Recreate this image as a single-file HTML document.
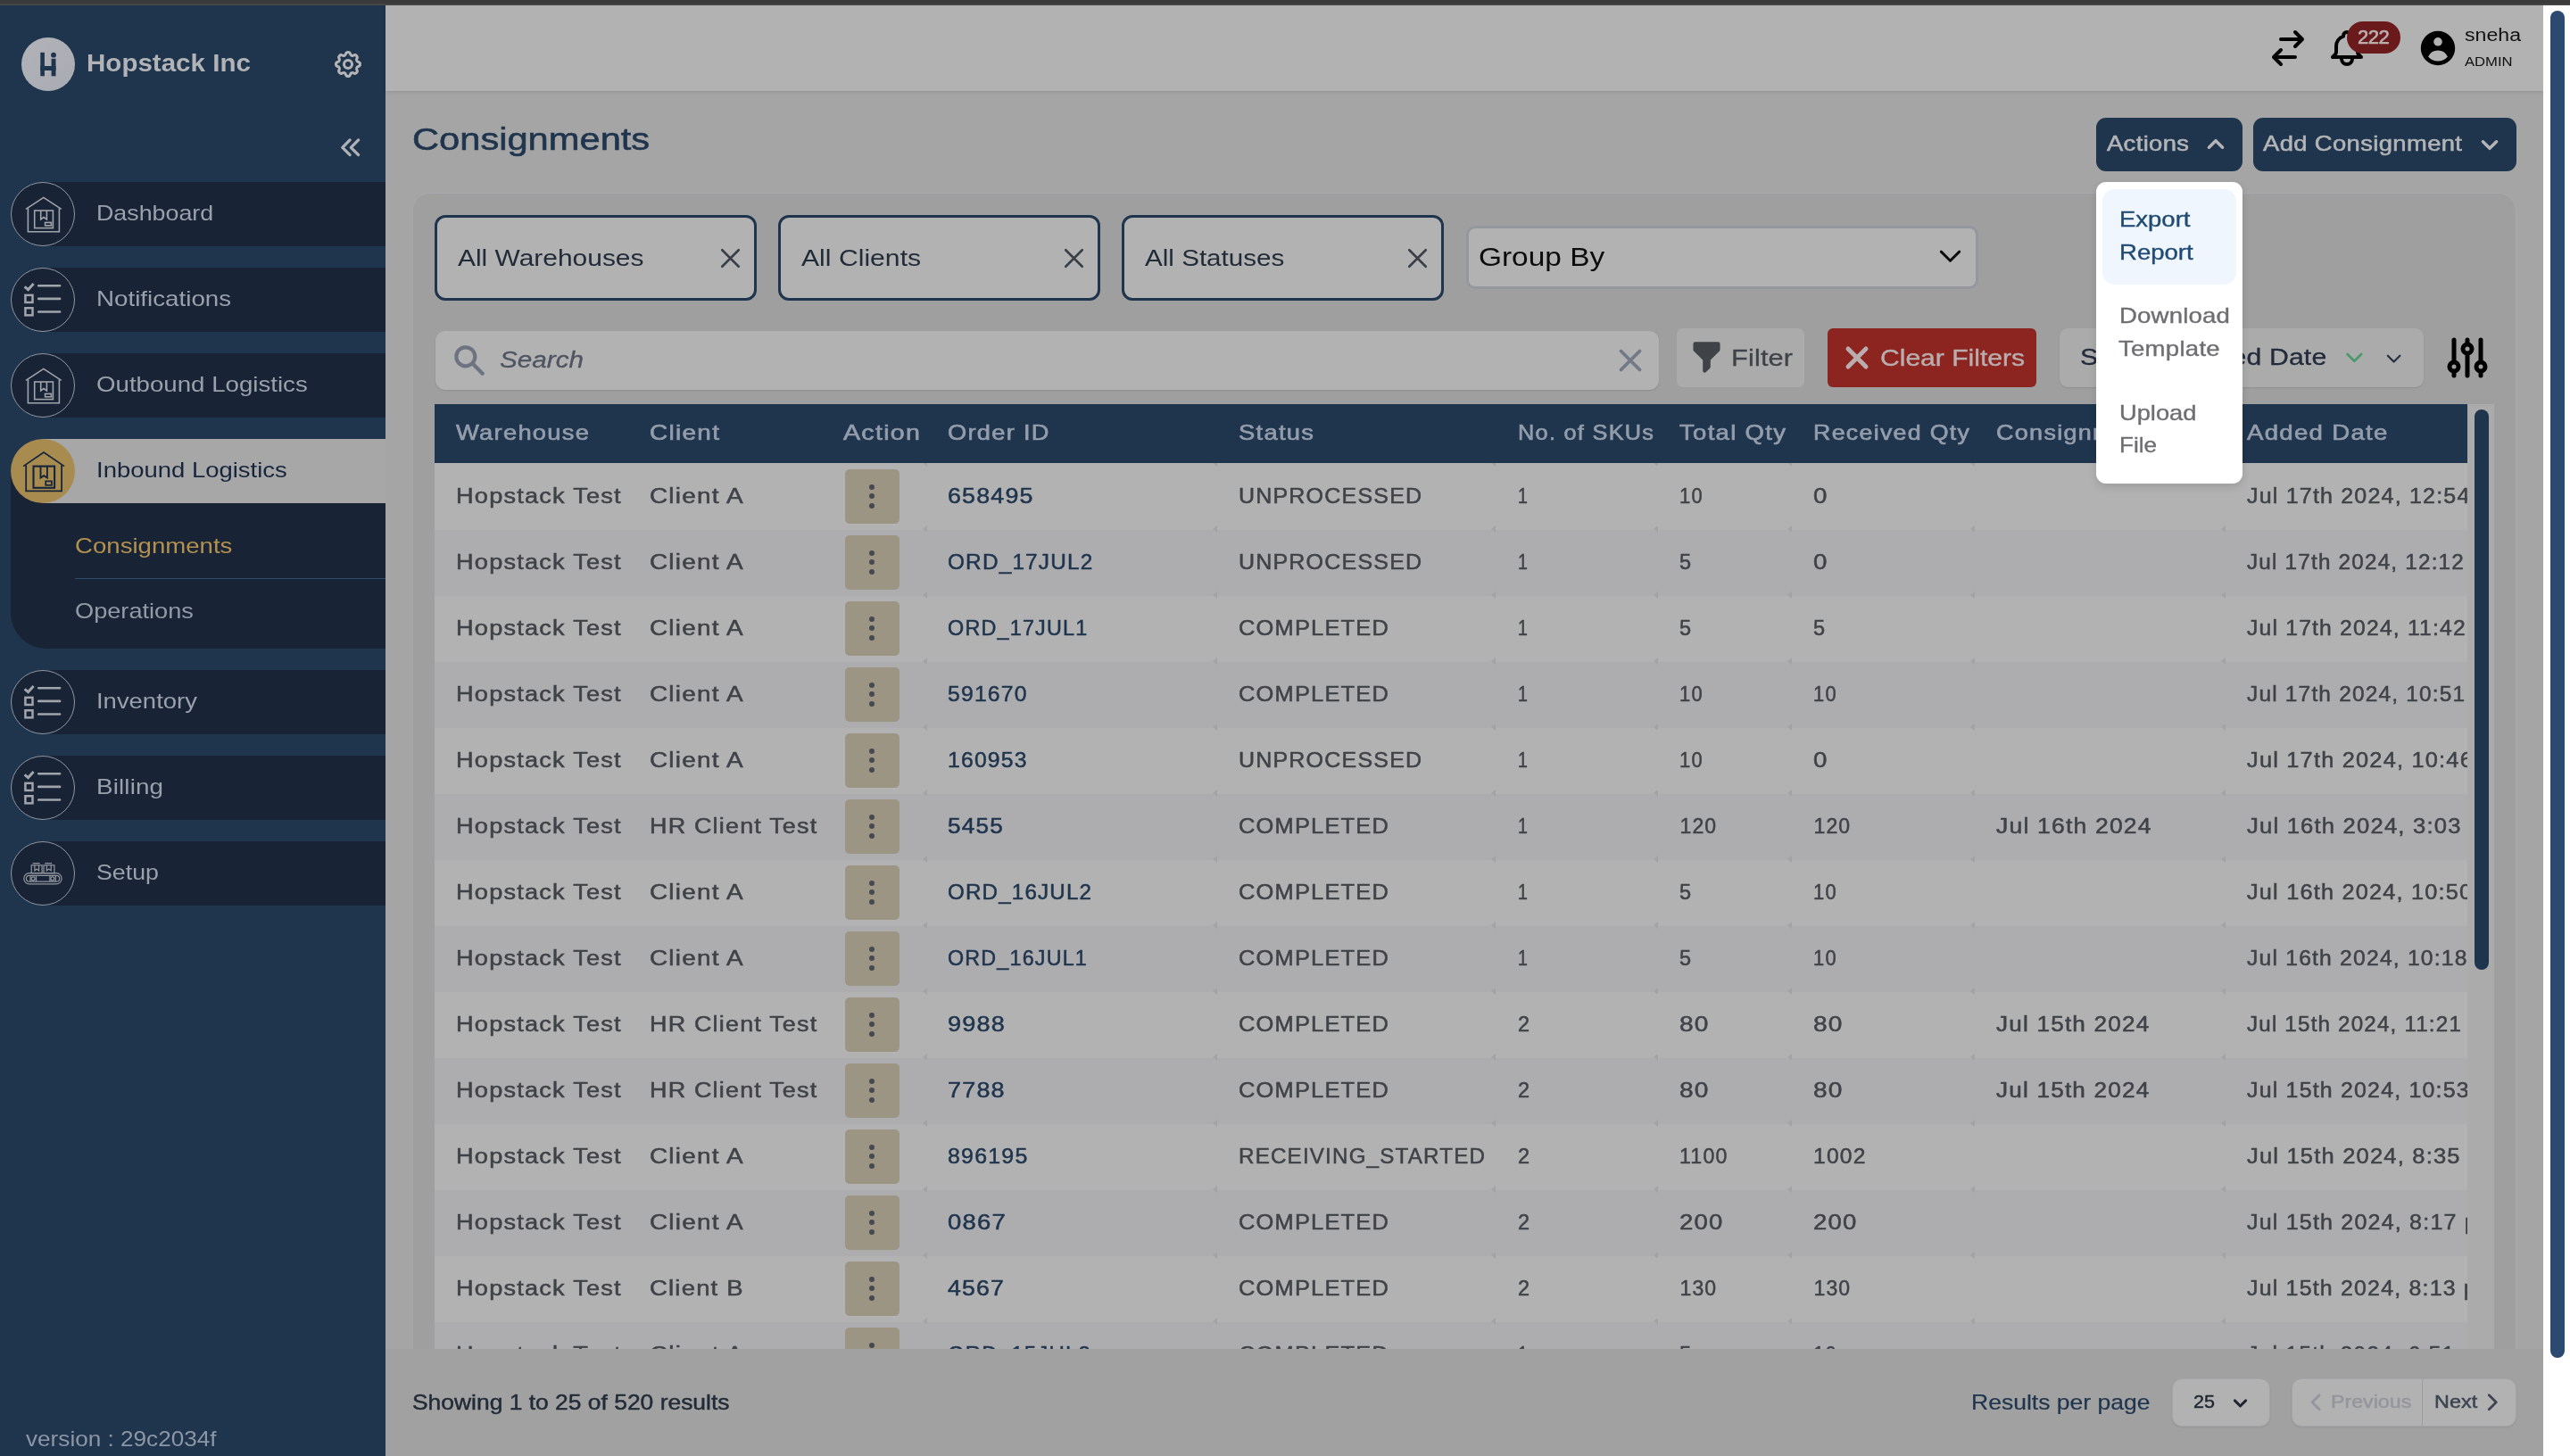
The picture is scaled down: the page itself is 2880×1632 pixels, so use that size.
<!DOCTYPE html><html lang="en"><head><meta charset="utf-8"><title>Consignments - Hopstack</title><style>
*{margin:0;padding:0;box-sizing:content-box}
html,body{width:2880px;height:1632px;overflow:hidden;background:#a5a5a5;font-family:"Liberation Sans",sans-serif;}
#app{will-change:transform;position:relative;width:2880px;height:1632px;overflow:hidden}
.b{position:absolute;display:block}
.t{position:absolute;white-space:pre;display:block;transform-origin:0 50%}
.row,.thead{position:absolute;left:0;top:0}
.dot{position:absolute;left:27.5px;width:6px;height:6px;border-radius:50%;background:#454950}
.tick{position:absolute;width:0;height:0;border-top:4.5px solid transparent;border-bottom:4.5px solid transparent;border-right:5px solid #a3a3a6}
</style></head><body>
<div id="app">
<div class="b" style="left:0px;top:0px;width:2880px;height:6px;background:linear-gradient(#3a3a3a 0,#3b3b3b 60%,#494a48 90%,#494a48 100%);"></div>
<div id="sidebar">
<div class="b" style="left:0px;top:6px;width:432px;height:1626px;background:#1f344d;"></div>
<div class="b" style="left:24px;top:41.8px;width:60px;height:60px;background:linear-gradient(135deg,#b1b3b9,#a9abb2);border-radius:30px;"></div><svg class="b" style="left:24px;top:41.8px;" width="60" height="60" viewBox="0 0 60 60"><g fill="#1f344d"><rect x="21.3" y="16.8" width="4.6" height="26.5"/><rect x="21.3" y="32" width="17.2" height="5"/><rect x="33.6" y="23.8" width="4.9" height="19.5"/><circle cx="36" cy="19.7" r="2.9"/></g></svg><span class="t" style="left:96.7px;top:56.2px;font-size:28.3px;line-height:28.3px;color:#b1b3b6;font-weight:700;transform:scaleX(1.044);">Hopstack Inc</span><svg class="b" style="left:372px;top:54px;" width="36" height="36" viewBox="0 0 24 24"><g fill="none" stroke="#b3b5b8" stroke-width="2" stroke-linecap="round" stroke-linejoin="round"><path d="M10.325 4.317c.426-1.756 2.924-1.756 3.35 0a1.724 1.724 0 002.573 1.066c1.543-.94 3.31.826 2.37 2.37a1.724 1.724 0 001.065 2.572c1.756.426 1.756 2.924 0 3.35a1.724 1.724 0 00-1.066 2.573c.94 1.543-.826 3.31-2.37 2.37a1.724 1.724 0 00-2.572 1.065c-.426 1.756-2.924 1.756-3.35 0a1.724 1.724 0 00-2.573-1.066c-1.543.94-3.31-.826-2.37-2.37a1.724 1.724 0 00-1.065-2.572c-1.756-.426-1.756-2.924 0-3.35a1.724 1.724 0 001.066-2.573c-.94-1.543.826-3.31 2.37-2.37.996.608 2.296.07 2.572-1.065z"/><path d="M15 12a3 3 0 11-6 0 3 3 0 016 0z"/></g></svg><svg class="b" style="left:378.7px;top:150.6px;" width="28.6" height="28.6" viewBox="0 0 24 24"><path d="M11 19l-7-7 7-7m8 14l-7-7 7-7" fill="none" stroke="#b0b2b5" stroke-width="2.75" stroke-linecap="round" stroke-linejoin="round"/></svg>
<div class="b" style="left:12px;top:204px;width:420px;height:72px;background:#182336;border-radius:36px 0 0 36px;"></div>
<div class="b" style="left:12px;top:204px;width:72px;height:72px;border-radius:36px;border:1.6px solid #9299a3;box-sizing:border-box;"></div><svg class="b" style="left:12px;top:204px;" width="72" height="72" viewBox="0 0 72 72"><g fill="none" stroke="#a0a4ab" stroke-width="1.6" stroke-linejoin="miter"><path d="M17 30.3L36.8 17.4L56.7 30.3"/><path d="M19.4 29.2V55.8H54.4V29.2"/><rect x="26.7" y="32" width="20.7" height="19.6"/><path d="M33.7 32V42L37 39.6L40.4 42V32"/><rect x="38.6" y="45.4" width="6.8" height="3.4"/></g></svg><span class="t" style="left:108.4px;top:227.8px;font-size:23.6px;line-height:23.6px;color:#9aa1ab;transform:scaleX(1.136);">Dashboard</span>
<div class="b" style="left:12px;top:300px;width:420px;height:72px;background:#182336;border-radius:36px 0 0 36px;"></div>
<div class="b" style="left:12px;top:300px;width:72px;height:72px;border-radius:36px;border:1.6px solid #9299a3;box-sizing:border-box;"></div><svg class="b" style="left:12px;top:300px;" width="72" height="72" viewBox="0 0 72 72"><g fill="none" stroke="#a0a4ab" stroke-width="2.6" stroke-linecap="round"><path d="M31.2 20.2H55.1M31.2 34.9H55.1M31.2 49.5H55.1"/><rect x="16.4" y="30.85" width="8.1" height="8.1" stroke-width="2.5" stroke-linecap="butt"/><rect x="16.4" y="45.25" width="8.1" height="8.1" stroke-width="2.5" stroke-linecap="butt"/><path d="M15.6 21.3L19.6 24.6L25.6 18.0" stroke-width="3" stroke-linecap="butt"/></g></svg><span class="t" style="left:108.4px;top:323.8px;font-size:23.6px;line-height:23.6px;color:#9aa1ab;transform:scaleX(1.176);">Notifications</span>
<div class="b" style="left:12px;top:396px;width:420px;height:72px;background:#182336;border-radius:36px 0 0 36px;"></div>
<div class="b" style="left:12px;top:396px;width:72px;height:72px;border-radius:36px;border:1.6px solid #9299a3;box-sizing:border-box;"></div><svg class="b" style="left:12px;top:396px;" width="72" height="72" viewBox="0 0 72 72"><g fill="none" stroke="#a0a4ab" stroke-width="1.6" stroke-linejoin="miter"><path d="M17 30.3L36.8 17.4L56.7 30.3"/><path d="M19.4 29.2V55.8H54.4V29.2"/><rect x="26.7" y="32" width="20.7" height="19.6"/><path d="M33.7 32V42L37 39.6L40.4 42V32"/><rect x="38.6" y="45.4" width="6.8" height="3.4"/></g></svg><span class="t" style="left:108.4px;top:419.8px;font-size:23.6px;line-height:23.6px;color:#9aa1ab;transform:scaleX(1.172);">Outbound Logistics</span>
<div class="b" style="left:12px;top:528px;width:420px;height:198.5px;background:#182336;border-radius:0 0 0 40px;"></div>
<div class="b" style="left:48px;top:492px;width:384px;height:72px;background:#a7a7a7;"></div>
<div class="b" style="left:12px;top:492px;width:72px;height:72px;background:#a88b4e;border-radius:36px;"></div><svg class="b" style="left:12px;top:492px;" width="72" height="72" viewBox="0 0 72 72"><g fill="none" stroke="#16243b" stroke-width="1.75" stroke-linejoin="miter"><path d="M14.1 30.6L37 15L60 30.6"/><path d="M17.2 29.2V58.3H57.1V29.2"/><rect x="25.5" y="30.6" width="23.6" height="24.2" stroke-width="2.1"/><path d="M33.5 30.6V43.5L37.2 41.2L40.9 43.5V30.6" stroke-width="1.9"/><rect x="39.2" y="47.4" width="6.8" height="4.4"/></g></svg><span class="t" style="left:108.4px;top:515.8px;font-size:23.6px;line-height:23.6px;color:#17253c;transform:scaleX(1.164);">Inbound Logistics</span><span class="t" style="left:83.6px;top:600.3px;font-size:24px;line-height:24px;color:#b3924f;transform:scaleX(1.150);">Consignments</span>
<div class="b" style="left:84px;top:647.6px;width:348px;height:1.4px;background:#2c4c69;"></div><span class="t" style="left:83.6px;top:672.6px;font-size:24px;line-height:24px;color:#929ba7;transform:scaleX(1.132);">Operations</span>
<div class="b" style="left:12px;top:751px;width:420px;height:72px;background:#182336;border-radius:36px 0 0 36px;"></div>
<div class="b" style="left:12px;top:751px;width:72px;height:72px;border-radius:36px;border:1.6px solid #9299a3;box-sizing:border-box;"></div><svg class="b" style="left:12px;top:751px;" width="72" height="72" viewBox="0 0 72 72"><g fill="none" stroke="#a0a4ab" stroke-width="2.6" stroke-linecap="round"><path d="M31.2 20.2H55.1M31.2 34.9H55.1M31.2 49.5H55.1"/><rect x="16.4" y="30.85" width="8.1" height="8.1" stroke-width="2.5" stroke-linecap="butt"/><rect x="16.4" y="45.25" width="8.1" height="8.1" stroke-width="2.5" stroke-linecap="butt"/><path d="M15.6 21.3L19.6 24.6L25.6 18.0" stroke-width="3" stroke-linecap="butt"/></g></svg><span class="t" style="left:108.4px;top:774.8px;font-size:23.6px;line-height:23.6px;color:#9aa1ab;transform:scaleX(1.163);">Inventory</span>
<div class="b" style="left:12px;top:847px;width:420px;height:72px;background:#182336;border-radius:36px 0 0 36px;"></div>
<div class="b" style="left:12px;top:847px;width:72px;height:72px;border-radius:36px;border:1.6px solid #9299a3;box-sizing:border-box;"></div><svg class="b" style="left:12px;top:847px;" width="72" height="72" viewBox="0 0 72 72"><g fill="none" stroke="#a0a4ab" stroke-width="2.6" stroke-linecap="round"><path d="M31.2 20.2H55.1M31.2 34.9H55.1M31.2 49.5H55.1"/><rect x="16.4" y="30.85" width="8.1" height="8.1" stroke-width="2.5" stroke-linecap="butt"/><rect x="16.4" y="45.25" width="8.1" height="8.1" stroke-width="2.5" stroke-linecap="butt"/><path d="M15.6 21.3L19.6 24.6L25.6 18.0" stroke-width="3" stroke-linecap="butt"/></g></svg><span class="t" style="left:108.4px;top:870.8px;font-size:23.6px;line-height:23.6px;color:#9aa1ab;letter-spacing:0.11px;transform:scaleX(1.180);">Billing</span>
<div class="b" style="left:12px;top:943px;width:420px;height:72px;background:#182336;border-radius:36px 0 0 36px;"></div>
<div class="b" style="left:12px;top:943px;width:72px;height:72px;border-radius:36px;border:1.6px solid #9299a3;box-sizing:border-box;"></div><svg class="b" style="left:12px;top:943px;" width="72" height="72" viewBox="0 0 72 72"><g fill="none" stroke="#a0a4ab" stroke-width="1.2" opacity="0.9"><rect x="14.8" y="35.6" width="42.3" height="12.3" rx="6.15"/><rect x="17.4" y="38.4" width="37.3" height="6.8" rx="3.4"/><circle cx="25.1" cy="41.8" r="2"/><circle cx="46.8" cy="41.8" r="2"/><path d="M22 38.6V45M28.5 38.4V45.2M43.9 38.4V45.2M50.3 38.6V45"/><rect x="23.2" y="26.8" width="11.9" height="9.0"/><rect x="37" y="26.8" width="11.9" height="9.0"/><path d="M24.6 24.7H32.7M38.2 24.7H46.2"/><path d="M26.9 26.8V32.9L29.2 31L31.6 32.9V26.8M40.3 26.8V32.9L42.7 31L45.2 32.9V26.8"/></g></svg><span class="t" style="left:108.4px;top:966.8px;font-size:23.6px;line-height:23.6px;color:#9aa1ab;transform:scaleX(1.134);">Setup</span><span class="t" style="left:28.7px;top:1601.1px;font-size:24px;line-height:24px;color:#8c96a4;transform:scaleX(1.089);">version : 29c2034f</span></div>
<div id="toolbar"><span class="t" style="left:462.0px;top:138.9px;font-size:35.5px;line-height:35.5px;color:#1f344d;-webkit-text-stroke:0.6px #1f344d;transform:scaleX(1.173);">Consignments</span>
<div class="b" style="left:2349px;top:132px;width:164px;height:60px;background:#1f344d;border-radius:11px;"></div><span class="t" style="left:2360.9px;top:150.4px;font-size:23.2px;line-height:23.2px;color:#b4b5b7;letter-spacing:0.31px;-webkit-text-stroke:0.55px #b4b5b7;transform:scaleX(1.180);">Actions</span><svg class="b" style="left:2470px;top:149.3px;" width="26" height="26" viewBox="0 0 24 24"><path d="M5 15l7-7 7 7" fill="none" stroke="#b4b5b7" stroke-width="3.2" stroke-linecap="round" stroke-linejoin="round"/></svg>
<div class="b" style="left:2525px;top:132px;width:295px;height:60px;background:#1f344d;border-radius:11px;"></div><span class="t" style="left:2536.1px;top:150.4px;font-size:23.2px;line-height:23.2px;color:#b4b5b7;letter-spacing:0.33px;-webkit-text-stroke:0.55px #b4b5b7;transform:scaleX(1.180);">Add Consignment</span><svg class="b" style="left:2777px;top:149.3px;" width="26" height="26" viewBox="0 0 24 24"><path d="M19 9l-7 7-7-7" fill="none" stroke="#b4b5b7" stroke-width="3.2" stroke-linecap="round" stroke-linejoin="round"/></svg></div>
<div id="filters">
<div class="b" style="left:462px;top:216px;width:2358px;height:1344px;background:#9f9f9f;border-radius:20px;border:1.5px solid #a9a9ad;box-sizing:border-box;"></div>
<div class="b" style="left:486.7px;top:240.6px;width:361.4px;height:96px;background:#b2b2b2;border-radius:12px;border:3px solid #1f344d;box-sizing:border-box;"></div><span class="t" style="left:513.3px;top:276.1px;font-size:26px;line-height:26px;color:#222b38;transform:scaleX(1.151);">All Warehouses</span><svg class="b" style="left:799.5px;top:270.6px;" width="37" height="37" viewBox="0 0 24 24"><path d="M6 18L18 6M6 6l12 12" fill="none" stroke="#393e49" stroke-width="1.7" stroke-linecap="round" stroke-linejoin="round"/></svg>
<div class="b" style="left:871.6px;top:240.6px;width:361.6px;height:96px;background:#b2b2b2;border-radius:12px;border:3px solid #1f344d;box-sizing:border-box;"></div><span class="t" style="left:898.0px;top:276.1px;font-size:26px;line-height:26px;color:#222b38;transform:scaleX(1.160);">All Clients</span><svg class="b" style="left:1184.5px;top:270.6px;" width="37" height="37" viewBox="0 0 24 24"><path d="M6 18L18 6M6 6l12 12" fill="none" stroke="#393e49" stroke-width="1.7" stroke-linecap="round" stroke-linejoin="round"/></svg>
<div class="b" style="left:1256.6px;top:240.6px;width:361.7px;height:96px;background:#b2b2b2;border-radius:12px;border:3px solid #1f344d;box-sizing:border-box;"></div><span class="t" style="left:1283.4px;top:276.1px;font-size:26px;line-height:26px;color:#222b38;transform:scaleX(1.139);">All Statuses</span><svg class="b" style="left:1569.5px;top:270.6px;" width="37" height="37" viewBox="0 0 24 24"><path d="M6 18L18 6M6 6l12 12" fill="none" stroke="#393e49" stroke-width="1.7" stroke-linecap="round" stroke-linejoin="round"/></svg>
<div class="b" style="left:1643px;top:253.4px;width:574px;height:70.6px;background:#b2b2b2;border-radius:10px;border:3px solid #95979e;box-sizing:border-box;"></div><span class="t" style="left:1656.5px;top:274.2px;font-size:29px;line-height:29px;color:#0c0c0c;transform:scaleX(1.152);">Group By</span><svg class="b" style="left:2167.5px;top:268.5px;" width="35" height="35" viewBox="0 0 24 24"><path d="M19 9l-7 7-7-7" fill="none" stroke="#0c0c0c" stroke-width="2" stroke-linecap="round" stroke-linejoin="round"/></svg>
<div class="b" style="left:487.6px;top:371px;width:1371.1px;height:65.8px;background:#b2b2b2;border-radius:11px;box-shadow:0 1px 2px rgba(0,0,0,.12);"></div><svg class="b" style="left:505px;top:382.9px;" width="42" height="42" viewBox="0 0 20 20"><path d="M8 4a4 4 0 100 8 4 4 0 000-8zM2 8a6 6 0 1110.89 3.476l4.817 4.817a1 1 0 01-1.414 1.414l-4.816-4.816A6 6 0 012 8z" fill="#6d7380" fill-rule="evenodd" clip-rule="evenodd"/></svg><span class="t" style="left:559.5px;top:390.2px;font-size:26px;line-height:26px;color:#4e5561;font-style:italic;-webkit-text-stroke:0.3px #4e5561;transform:scaleX(1.141);">Search</span><svg class="b" style="left:1805.7px;top:382.8px;" width="42" height="42" viewBox="0 0 24 24"><path d="M6 18L18 6M6 6l12 12" fill="none" stroke="#737987" stroke-width="2.2" stroke-linecap="round" stroke-linejoin="round"/></svg>
<div class="b" style="left:1878.6px;top:368px;width:143.4px;height:65.7px;background:#ababab;border-radius:7px;"></div><svg class="b" style="left:1890.5px;top:379.4px;" width="43" height="43" viewBox="0 0 20 20"><path d="M3 3a1 1 0 011-1h12a1 1 0 011 1v3a1 1 0 01-.293.707L12 11.414V15a1 1 0 01-.293.707l-2 2A1 1 0 018 17v-5.586L3.293 6.707A1 1 0 013 6V3z" fill="#3f4348" fill-rule="evenodd" clip-rule="evenodd"/></svg><span class="t" style="left:1939.8px;top:387.6px;font-size:26px;line-height:26px;color:#3f4348;letter-spacing:0.15px;-webkit-text-stroke:0.3px #3f4348;transform:scaleX(1.180);">Filter</span>
<div class="b" style="left:2048px;top:368px;width:234px;height:65.7px;background:#8c2420;border-radius:6px;"></div><svg class="b" style="left:2061px;top:381px;" width="40" height="40" viewBox="0 0 24 24"><path d="M6 18L18 6M6 6l12 12" fill="none" stroke="#b9adad" stroke-width="3" stroke-linecap="round" stroke-linejoin="round"/></svg><span class="t" style="left:2107.4px;top:387.6px;font-size:26px;line-height:26px;color:#b9adad;-webkit-text-stroke:0.4px #b9adad;transform:scaleX(1.156);">Clear Filters</span>
<div class="b" style="left:2308px;top:368px;width:408px;height:66px;background:#ababab;border-radius:9px;box-shadow:0 1px 2px rgba(0,0,0,.10);"></div><span class="t" style="left:2331.0px;top:387.8px;font-size:25.6px;line-height:25.6px;color:#222b3b;letter-spacing:0.12px;-webkit-text-stroke:0.3px #222b3b;transform:scaleX(1.180);">Sort By: Added Date</span><svg class="b" style="left:2624.65px;top:387.45px;" width="26.7" height="26.7" viewBox="0 0 24 24"><path d="M19 9l-7 7-7-7" fill="none" stroke="#489a6b" stroke-width="2.4" stroke-linecap="round" stroke-linejoin="round"/></svg><svg class="b" style="left:2671.4px;top:389.5px;" width="23.2" height="23.2" viewBox="0 0 24 24"><path d="M19 9l-7 7-7-7" fill="none" stroke="#272e3f" stroke-width="2.3" stroke-linecap="round" stroke-linejoin="round"/></svg><svg class="b" style="left:2735.1px;top:370.9px;" width="60" height="60" viewBox="0 0 24 24"><path d="M12 6V4m0 2a2 2 0 100 4m0-4a2 2 0 110 4m-6 8a2 2 0 100-4m0 4a2 2 0 110-4m0 4v2m0-6V4m6 6v10m6-2a2 2 0 100-4m0 4a2 2 0 110-4m0 4v2m0-6V4" fill="none" stroke="#000" stroke-width="2" stroke-linecap="round" stroke-linejoin="round"/></svg></div>
<div id="table">
<div class="b tbl" style="left:487px;top:453px;width:2278px;height:1059px;overflow:hidden;">
<div class="row">
<div class="b" style="left:0px;top:64.8px;width:2278px;height:76px;background:#b2b2b2;"></div><span class="t" style="left:23.6px;top:92.4px;font-size:23px;line-height:23px;color:#3f4247;letter-spacing:1.02px;-webkit-text-stroke:0.5px #3f4247;transform:scaleX(1.181);">Hopstack Test</span><span class="t" style="left:240.8px;top:92.4px;font-size:23px;line-height:23px;color:#3f4247;letter-spacing:0.99px;-webkit-text-stroke:0.5px #3f4247;transform:scaleX(1.214);">Client A</span>
<div class="b" style="left:459.7px;top:73.4px;width:61px;height:61px;background:#9d9583;border-radius:5px;"><i class="dot" style="top:16.3px"></i><i class="dot" style="top:27.1px"></i><i class="dot" style="top:37.8px"></i></div><span class="t" style="left:574.9px;top:92.4px;font-size:23px;line-height:23px;color:#1f344d;letter-spacing:1.03px;-webkit-text-stroke:0.5px #1f344d;transform:scaleX(1.166);">658495</span><span class="t" style="left:901.3px;top:92.4px;font-size:23px;line-height:23px;color:#3f4247;letter-spacing:1.10px;-webkit-text-stroke:0.5px #3f4247;transform:scaleX(1.087);">UNPROCESSED</span><span class="t" style="left:1214.1px;top:92.4px;font-size:23px;line-height:23px;color:#3f4247;-webkit-text-stroke:0.5px #3f4247;transform:scaleX(0.850);">1</span><span class="t" style="left:1395.4px;top:92.4px;font-size:23px;line-height:23px;color:#3f4247;letter-spacing:1.26px;-webkit-text-stroke:0.5px #3f4247;transform:scaleX(0.952);">10</span><span class="t" style="left:1545.4px;top:92.4px;font-size:23px;line-height:23px;color:#3f4247;-webkit-text-stroke:0.5px #3f4247;transform:scaleX(1.205);">0</span><span class="t" style="left:2030.8px;top:92.4px;font-size:23px;line-height:23px;color:#3f4247;letter-spacing:1.10px;-webkit-text-stroke:0.5px #3f4247;transform:scaleX(1.087);">Jul 17th 2024, 12:54 pm</span><i class="tick" style="left:546.5px;top:62.3px"></i><i class="tick" style="left:872px;top:62.3px"></i><i class="tick" style="left:1184px;top:62.3px"></i><i class="tick" style="left:1366px;top:62.3px"></i><i class="tick" style="left:1516px;top:62.3px"></i><i class="tick" style="left:1721px;top:62.3px"></i><i class="tick" style="left:2002px;top:62.3px"></i></div>
<div class="row">
<div class="b" style="left:0px;top:140.8px;width:2278px;height:74px;background:#adadb0;"></div><span class="t" style="left:23.6px;top:166.4px;font-size:23px;line-height:23px;color:#3f4247;letter-spacing:1.02px;-webkit-text-stroke:0.5px #3f4247;transform:scaleX(1.181);">Hopstack Test</span><span class="t" style="left:240.8px;top:166.4px;font-size:23px;line-height:23px;color:#3f4247;letter-spacing:0.99px;-webkit-text-stroke:0.5px #3f4247;transform:scaleX(1.214);">Client A</span>
<div class="b" style="left:459.7px;top:147.4px;width:61px;height:61px;background:#9d9583;border-radius:5px;"><i class="dot" style="top:16.3px"></i><i class="dot" style="top:27.1px"></i><i class="dot" style="top:37.8px"></i></div><span class="t" style="left:574.9px;top:166.4px;font-size:23px;line-height:23px;color:#1f344d;letter-spacing:1.13px;-webkit-text-stroke:0.5px #1f344d;transform:scaleX(1.058);">ORD_17JUL2</span><span class="t" style="left:901.3px;top:166.4px;font-size:23px;line-height:23px;color:#3f4247;letter-spacing:1.10px;-webkit-text-stroke:0.5px #3f4247;transform:scaleX(1.087);">UNPROCESSED</span><span class="t" style="left:1214.1px;top:166.4px;font-size:23px;line-height:23px;color:#3f4247;-webkit-text-stroke:0.5px #3f4247;transform:scaleX(0.850);">1</span><span class="t" style="left:1395.4px;top:166.4px;font-size:23px;line-height:23px;color:#3f4247;-webkit-text-stroke:0.5px #3f4247;transform:scaleX(1.023);">5</span><span class="t" style="left:1545.4px;top:166.4px;font-size:23px;line-height:23px;color:#3f4247;-webkit-text-stroke:0.5px #3f4247;transform:scaleX(1.205);">0</span><span class="t" style="left:2030.8px;top:166.4px;font-size:23px;line-height:23px;color:#3f4247;letter-spacing:1.14px;-webkit-text-stroke:0.5px #3f4247;transform:scaleX(1.055);">Jul 17th 2024, 12:12 pm</span><i class="tick" style="left:546.5px;top:136.3px"></i><i class="tick" style="left:872px;top:136.3px"></i><i class="tick" style="left:1184px;top:136.3px"></i><i class="tick" style="left:1366px;top:136.3px"></i><i class="tick" style="left:1516px;top:136.3px"></i><i class="tick" style="left:1721px;top:136.3px"></i><i class="tick" style="left:2002px;top:136.3px"></i></div>
<div class="row">
<div class="b" style="left:0px;top:214.8px;width:2278px;height:74px;background:#b2b2b2;"></div><span class="t" style="left:23.6px;top:240.4px;font-size:23px;line-height:23px;color:#3f4247;letter-spacing:1.02px;-webkit-text-stroke:0.5px #3f4247;transform:scaleX(1.181);">Hopstack Test</span><span class="t" style="left:240.8px;top:240.4px;font-size:23px;line-height:23px;color:#3f4247;letter-spacing:0.99px;-webkit-text-stroke:0.5px #3f4247;transform:scaleX(1.214);">Client A</span>
<div class="b" style="left:459.7px;top:221.4px;width:61px;height:61px;background:#9d9583;border-radius:5px;"><i class="dot" style="top:16.3px"></i><i class="dot" style="top:27.1px"></i><i class="dot" style="top:37.8px"></i></div><span class="t" style="left:574.9px;top:240.4px;font-size:23px;line-height:23px;color:#1f344d;letter-spacing:1.18px;-webkit-text-stroke:0.5px #1f344d;transform:scaleX(1.016);">ORD_17JUL1</span><span class="t" style="left:901.3px;top:240.4px;font-size:23px;line-height:23px;color:#3f4247;letter-spacing:1.09px;-webkit-text-stroke:0.5px #3f4247;transform:scaleX(1.105);">COMPLETED</span><span class="t" style="left:1214.1px;top:240.4px;font-size:23px;line-height:23px;color:#3f4247;-webkit-text-stroke:0.5px #3f4247;transform:scaleX(0.850);">1</span><span class="t" style="left:1395.4px;top:240.4px;font-size:23px;line-height:23px;color:#3f4247;-webkit-text-stroke:0.5px #3f4247;transform:scaleX(1.023);">5</span><span class="t" style="left:1545.4px;top:240.4px;font-size:23px;line-height:23px;color:#3f4247;-webkit-text-stroke:0.5px #3f4247;transform:scaleX(1.023);">5</span><span class="t" style="left:2030.8px;top:240.4px;font-size:23px;line-height:23px;color:#3f4247;letter-spacing:1.12px;-webkit-text-stroke:0.5px #3f4247;transform:scaleX(1.073);">Jul 17th 2024, 11:42 am</span><i class="tick" style="left:546.5px;top:210.3px"></i><i class="tick" style="left:872px;top:210.3px"></i><i class="tick" style="left:1184px;top:210.3px"></i><i class="tick" style="left:1366px;top:210.3px"></i><i class="tick" style="left:1516px;top:210.3px"></i><i class="tick" style="left:1721px;top:210.3px"></i><i class="tick" style="left:2002px;top:210.3px"></i></div>
<div class="row">
<div class="b" style="left:0px;top:288.8px;width:2278px;height:74px;background:#adadb0;"></div><span class="t" style="left:23.6px;top:314.4px;font-size:23px;line-height:23px;color:#3f4247;letter-spacing:1.02px;-webkit-text-stroke:0.5px #3f4247;transform:scaleX(1.181);">Hopstack Test</span><span class="t" style="left:240.8px;top:314.4px;font-size:23px;line-height:23px;color:#3f4247;letter-spacing:0.99px;-webkit-text-stroke:0.5px #3f4247;transform:scaleX(1.214);">Client A</span>
<div class="b" style="left:459.7px;top:295.4px;width:61px;height:61px;background:#9d9583;border-radius:5px;"><i class="dot" style="top:16.3px"></i><i class="dot" style="top:27.1px"></i><i class="dot" style="top:37.8px"></i></div><span class="t" style="left:574.9px;top:314.4px;font-size:23px;line-height:23px;color:#1f344d;letter-spacing:1.12px;-webkit-text-stroke:0.5px #1f344d;transform:scaleX(1.075);">591670</span><span class="t" style="left:901.3px;top:314.4px;font-size:23px;line-height:23px;color:#3f4247;letter-spacing:1.09px;-webkit-text-stroke:0.5px #3f4247;transform:scaleX(1.105);">COMPLETED</span><span class="t" style="left:1214.1px;top:314.4px;font-size:23px;line-height:23px;color:#3f4247;-webkit-text-stroke:0.5px #3f4247;transform:scaleX(0.850);">1</span><span class="t" style="left:1395.4px;top:314.4px;font-size:23px;line-height:23px;color:#3f4247;letter-spacing:1.26px;-webkit-text-stroke:0.5px #3f4247;transform:scaleX(0.952);">10</span><span class="t" style="left:1545.4px;top:314.4px;font-size:23px;line-height:23px;color:#3f4247;letter-spacing:1.26px;-webkit-text-stroke:0.5px #3f4247;transform:scaleX(0.952);">10</span><span class="t" style="left:2030.8px;top:314.4px;font-size:23px;line-height:23px;color:#3f4247;letter-spacing:1.13px;-webkit-text-stroke:0.5px #3f4247;transform:scaleX(1.062);">Jul 17th 2024, 10:51 am</span><i class="tick" style="left:546.5px;top:284.3px"></i><i class="tick" style="left:872px;top:284.3px"></i><i class="tick" style="left:1184px;top:284.3px"></i><i class="tick" style="left:1366px;top:284.3px"></i><i class="tick" style="left:1516px;top:284.3px"></i><i class="tick" style="left:1721px;top:284.3px"></i><i class="tick" style="left:2002px;top:284.3px"></i></div>
<div class="row">
<div class="b" style="left:0px;top:362.8px;width:2278px;height:74px;background:#b2b2b2;"></div><span class="t" style="left:23.6px;top:388.4px;font-size:23px;line-height:23px;color:#3f4247;letter-spacing:1.02px;-webkit-text-stroke:0.5px #3f4247;transform:scaleX(1.181);">Hopstack Test</span><span class="t" style="left:240.8px;top:388.4px;font-size:23px;line-height:23px;color:#3f4247;letter-spacing:0.99px;-webkit-text-stroke:0.5px #3f4247;transform:scaleX(1.214);">Client A</span>
<div class="b" style="left:459.7px;top:369.4px;width:61px;height:61px;background:#9d9583;border-radius:5px;"><i class="dot" style="top:16.3px"></i><i class="dot" style="top:27.1px"></i><i class="dot" style="top:37.8px"></i></div><span class="t" style="left:574.9px;top:388.4px;font-size:23px;line-height:23px;color:#1f344d;letter-spacing:1.12px;-webkit-text-stroke:0.5px #1f344d;transform:scaleX(1.075);">160953</span><span class="t" style="left:901.3px;top:388.4px;font-size:23px;line-height:23px;color:#3f4247;letter-spacing:1.10px;-webkit-text-stroke:0.5px #3f4247;transform:scaleX(1.087);">UNPROCESSED</span><span class="t" style="left:1214.1px;top:388.4px;font-size:23px;line-height:23px;color:#3f4247;-webkit-text-stroke:0.5px #3f4247;transform:scaleX(0.850);">1</span><span class="t" style="left:1395.4px;top:388.4px;font-size:23px;line-height:23px;color:#3f4247;letter-spacing:1.26px;-webkit-text-stroke:0.5px #3f4247;transform:scaleX(0.952);">10</span><span class="t" style="left:1545.4px;top:388.4px;font-size:23px;line-height:23px;color:#3f4247;-webkit-text-stroke:0.5px #3f4247;transform:scaleX(1.205);">0</span><span class="t" style="left:2030.8px;top:388.4px;font-size:23px;line-height:23px;color:#3f4247;letter-spacing:1.09px;-webkit-text-stroke:0.5px #3f4247;transform:scaleX(1.103);">Jul 17th 2024, 10:46 am</span><i class="tick" style="left:546.5px;top:358.3px"></i><i class="tick" style="left:872px;top:358.3px"></i><i class="tick" style="left:1184px;top:358.3px"></i><i class="tick" style="left:1366px;top:358.3px"></i><i class="tick" style="left:1516px;top:358.3px"></i><i class="tick" style="left:1721px;top:358.3px"></i><i class="tick" style="left:2002px;top:358.3px"></i></div>
<div class="row">
<div class="b" style="left:0px;top:436.8px;width:2278px;height:74px;background:#adadb0;"></div><span class="t" style="left:23.6px;top:462.4px;font-size:23px;line-height:23px;color:#3f4247;letter-spacing:1.02px;-webkit-text-stroke:0.5px #3f4247;transform:scaleX(1.181);">Hopstack Test</span><span class="t" style="left:240.8px;top:462.4px;font-size:23px;line-height:23px;color:#3f4247;letter-spacing:1.02px;-webkit-text-stroke:0.5px #3f4247;transform:scaleX(1.171);">HR Client Test</span>
<div class="b" style="left:459.7px;top:443.4px;width:61px;height:61px;background:#9d9583;border-radius:5px;"><i class="dot" style="top:16.3px"></i><i class="dot" style="top:27.1px"></i><i class="dot" style="top:37.8px"></i></div><span class="t" style="left:574.9px;top:462.4px;font-size:23px;line-height:23px;color:#1f344d;letter-spacing:1.06px;-webkit-text-stroke:0.5px #1f344d;transform:scaleX(1.136);">5455</span><span class="t" style="left:901.3px;top:462.4px;font-size:23px;line-height:23px;color:#3f4247;letter-spacing:1.09px;-webkit-text-stroke:0.5px #3f4247;transform:scaleX(1.105);">COMPLETED</span><span class="t" style="left:1214.1px;top:462.4px;font-size:23px;line-height:23px;color:#3f4247;-webkit-text-stroke:0.5px #3f4247;transform:scaleX(0.850);">1</span><span class="t" style="left:1395.4px;top:462.4px;font-size:23px;line-height:23px;color:#3f4247;letter-spacing:1.20px;-webkit-text-stroke:0.5px #3f4247;">120</span><span class="t" style="left:1545.4px;top:462.4px;font-size:23px;line-height:23px;color:#3f4247;letter-spacing:1.20px;-webkit-text-stroke:0.5px #3f4247;">120</span><span class="t" style="left:1750.1px;top:462.4px;font-size:23px;line-height:23px;color:#3f4247;letter-spacing:1.04px;-webkit-text-stroke:0.5px #3f4247;transform:scaleX(1.152);">Jul 16th 2024</span><span class="t" style="left:2030.8px;top:462.4px;font-size:23px;line-height:23px;color:#3f4247;letter-spacing:1.08px;-webkit-text-stroke:0.5px #3f4247;transform:scaleX(1.113);">Jul 16th 2024, 3:03 pm</span><i class="tick" style="left:546.5px;top:432.3px"></i><i class="tick" style="left:872px;top:432.3px"></i><i class="tick" style="left:1184px;top:432.3px"></i><i class="tick" style="left:1366px;top:432.3px"></i><i class="tick" style="left:1516px;top:432.3px"></i><i class="tick" style="left:1721px;top:432.3px"></i><i class="tick" style="left:2002px;top:432.3px"></i></div>
<div class="row">
<div class="b" style="left:0px;top:510.8px;width:2278px;height:74px;background:#b2b2b2;"></div><span class="t" style="left:23.6px;top:536.4px;font-size:23px;line-height:23px;color:#3f4247;letter-spacing:1.02px;-webkit-text-stroke:0.5px #3f4247;transform:scaleX(1.181);">Hopstack Test</span><span class="t" style="left:240.8px;top:536.4px;font-size:23px;line-height:23px;color:#3f4247;letter-spacing:0.99px;-webkit-text-stroke:0.5px #3f4247;transform:scaleX(1.214);">Client A</span>
<div class="b" style="left:459.7px;top:517.4px;width:61px;height:61px;background:#9d9583;border-radius:5px;"><i class="dot" style="top:16.3px"></i><i class="dot" style="top:27.1px"></i><i class="dot" style="top:37.8px"></i></div><span class="t" style="left:574.9px;top:536.4px;font-size:23px;line-height:23px;color:#1f344d;letter-spacing:1.14px;-webkit-text-stroke:0.5px #1f344d;transform:scaleX(1.049);">ORD_16JUL2</span><span class="t" style="left:901.3px;top:536.4px;font-size:23px;line-height:23px;color:#3f4247;letter-spacing:1.09px;-webkit-text-stroke:0.5px #3f4247;transform:scaleX(1.105);">COMPLETED</span><span class="t" style="left:1214.1px;top:536.4px;font-size:23px;line-height:23px;color:#3f4247;-webkit-text-stroke:0.5px #3f4247;transform:scaleX(0.850);">1</span><span class="t" style="left:1395.4px;top:536.4px;font-size:23px;line-height:23px;color:#3f4247;-webkit-text-stroke:0.5px #3f4247;transform:scaleX(1.023);">5</span><span class="t" style="left:1545.4px;top:536.4px;font-size:23px;line-height:23px;color:#3f4247;letter-spacing:1.26px;-webkit-text-stroke:0.5px #3f4247;transform:scaleX(0.952);">10</span><span class="t" style="left:2030.8px;top:536.4px;font-size:23px;line-height:23px;color:#3f4247;letter-spacing:1.09px;-webkit-text-stroke:0.5px #3f4247;transform:scaleX(1.100);">Jul 16th 2024, 10:50 am</span><i class="tick" style="left:546.5px;top:506.3px"></i><i class="tick" style="left:872px;top:506.3px"></i><i class="tick" style="left:1184px;top:506.3px"></i><i class="tick" style="left:1366px;top:506.3px"></i><i class="tick" style="left:1516px;top:506.3px"></i><i class="tick" style="left:1721px;top:506.3px"></i><i class="tick" style="left:2002px;top:506.3px"></i></div>
<div class="row">
<div class="b" style="left:0px;top:584.8px;width:2278px;height:74px;background:#adadb0;"></div><span class="t" style="left:23.6px;top:610.4px;font-size:23px;line-height:23px;color:#3f4247;letter-spacing:1.02px;-webkit-text-stroke:0.5px #3f4247;transform:scaleX(1.181);">Hopstack Test</span><span class="t" style="left:240.8px;top:610.4px;font-size:23px;line-height:23px;color:#3f4247;letter-spacing:0.99px;-webkit-text-stroke:0.5px #3f4247;transform:scaleX(1.214);">Client A</span>
<div class="b" style="left:459.7px;top:591.4px;width:61px;height:61px;background:#9d9583;border-radius:5px;"><i class="dot" style="top:16.3px"></i><i class="dot" style="top:27.1px"></i><i class="dot" style="top:37.8px"></i></div><span class="t" style="left:574.9px;top:610.4px;font-size:23px;line-height:23px;color:#1f344d;letter-spacing:1.18px;-webkit-text-stroke:0.5px #1f344d;transform:scaleX(1.013);">ORD_16JUL1</span><span class="t" style="left:901.3px;top:610.4px;font-size:23px;line-height:23px;color:#3f4247;letter-spacing:1.09px;-webkit-text-stroke:0.5px #3f4247;transform:scaleX(1.105);">COMPLETED</span><span class="t" style="left:1214.1px;top:610.4px;font-size:23px;line-height:23px;color:#3f4247;-webkit-text-stroke:0.5px #3f4247;transform:scaleX(0.850);">1</span><span class="t" style="left:1395.4px;top:610.4px;font-size:23px;line-height:23px;color:#3f4247;-webkit-text-stroke:0.5px #3f4247;transform:scaleX(1.023);">5</span><span class="t" style="left:1545.4px;top:610.4px;font-size:23px;line-height:23px;color:#3f4247;letter-spacing:1.26px;-webkit-text-stroke:0.5px #3f4247;transform:scaleX(0.952);">10</span><span class="t" style="left:2030.8px;top:610.4px;font-size:23px;line-height:23px;color:#3f4247;letter-spacing:1.12px;-webkit-text-stroke:0.5px #3f4247;transform:scaleX(1.073);">Jul 16th 2024, 10:18 am</span><i class="tick" style="left:546.5px;top:580.3px"></i><i class="tick" style="left:872px;top:580.3px"></i><i class="tick" style="left:1184px;top:580.3px"></i><i class="tick" style="left:1366px;top:580.3px"></i><i class="tick" style="left:1516px;top:580.3px"></i><i class="tick" style="left:1721px;top:580.3px"></i><i class="tick" style="left:2002px;top:580.3px"></i></div>
<div class="row">
<div class="b" style="left:0px;top:658.8px;width:2278px;height:74px;background:#b2b2b2;"></div><span class="t" style="left:23.6px;top:684.4px;font-size:23px;line-height:23px;color:#3f4247;letter-spacing:1.02px;-webkit-text-stroke:0.5px #3f4247;transform:scaleX(1.181);">Hopstack Test</span><span class="t" style="left:240.8px;top:684.4px;font-size:23px;line-height:23px;color:#3f4247;letter-spacing:1.02px;-webkit-text-stroke:0.5px #3f4247;transform:scaleX(1.171);">HR Client Test</span>
<div class="b" style="left:459.7px;top:665.4px;width:61px;height:61px;background:#9d9583;border-radius:5px;"><i class="dot" style="top:16.3px"></i><i class="dot" style="top:27.1px"></i><i class="dot" style="top:37.8px"></i></div><span class="t" style="left:574.9px;top:684.4px;font-size:23px;line-height:23px;color:#1f344d;letter-spacing:1.02px;-webkit-text-stroke:0.5px #1f344d;transform:scaleX(1.177);">9988</span><span class="t" style="left:901.3px;top:684.4px;font-size:23px;line-height:23px;color:#3f4247;letter-spacing:1.09px;-webkit-text-stroke:0.5px #3f4247;transform:scaleX(1.105);">COMPLETED</span><span class="t" style="left:1214.1px;top:684.4px;font-size:23px;line-height:23px;color:#3f4247;-webkit-text-stroke:0.5px #3f4247;transform:scaleX(1.021);">2</span><span class="t" style="left:1395.4px;top:684.4px;font-size:23px;line-height:23px;color:#3f4247;letter-spacing:0.98px;-webkit-text-stroke:0.5px #3f4247;transform:scaleX(1.221);">80</span><span class="t" style="left:1545.4px;top:684.4px;font-size:23px;line-height:23px;color:#3f4247;letter-spacing:0.98px;-webkit-text-stroke:0.5px #3f4247;transform:scaleX(1.221);">80</span><span class="t" style="left:1750.1px;top:684.4px;font-size:23px;line-height:23px;color:#3f4247;letter-spacing:1.06px;-webkit-text-stroke:0.5px #3f4247;transform:scaleX(1.135);">Jul 15th 2024</span><span class="t" style="left:2030.8px;top:684.4px;font-size:23px;line-height:23px;color:#3f4247;letter-spacing:1.14px;-webkit-text-stroke:0.5px #3f4247;transform:scaleX(1.050);">Jul 15th 2024, 11:21 pm</span><i class="tick" style="left:546.5px;top:654.3px"></i><i class="tick" style="left:872px;top:654.3px"></i><i class="tick" style="left:1184px;top:654.3px"></i><i class="tick" style="left:1366px;top:654.3px"></i><i class="tick" style="left:1516px;top:654.3px"></i><i class="tick" style="left:1721px;top:654.3px"></i><i class="tick" style="left:2002px;top:654.3px"></i></div>
<div class="row">
<div class="b" style="left:0px;top:732.8px;width:2278px;height:74px;background:#adadb0;"></div><span class="t" style="left:23.6px;top:758.4px;font-size:23px;line-height:23px;color:#3f4247;letter-spacing:1.02px;-webkit-text-stroke:0.5px #3f4247;transform:scaleX(1.181);">Hopstack Test</span><span class="t" style="left:240.8px;top:758.4px;font-size:23px;line-height:23px;color:#3f4247;letter-spacing:1.02px;-webkit-text-stroke:0.5px #3f4247;transform:scaleX(1.171);">HR Client Test</span>
<div class="b" style="left:459.7px;top:739.4px;width:61px;height:61px;background:#9d9583;border-radius:5px;"><i class="dot" style="top:16.3px"></i><i class="dot" style="top:27.1px"></i><i class="dot" style="top:37.8px"></i></div><span class="t" style="left:574.9px;top:758.4px;font-size:23px;line-height:23px;color:#1f344d;letter-spacing:1.02px;-webkit-text-stroke:0.5px #1f344d;transform:scaleX(1.173);">7788</span><span class="t" style="left:901.3px;top:758.4px;font-size:23px;line-height:23px;color:#3f4247;letter-spacing:1.09px;-webkit-text-stroke:0.5px #3f4247;transform:scaleX(1.105);">COMPLETED</span><span class="t" style="left:1214.1px;top:758.4px;font-size:23px;line-height:23px;color:#3f4247;-webkit-text-stroke:0.5px #3f4247;transform:scaleX(1.021);">2</span><span class="t" style="left:1395.4px;top:758.4px;font-size:23px;line-height:23px;color:#3f4247;letter-spacing:0.98px;-webkit-text-stroke:0.5px #3f4247;transform:scaleX(1.221);">80</span><span class="t" style="left:1545.4px;top:758.4px;font-size:23px;line-height:23px;color:#3f4247;letter-spacing:0.98px;-webkit-text-stroke:0.5px #3f4247;transform:scaleX(1.221);">80</span><span class="t" style="left:1750.1px;top:758.4px;font-size:23px;line-height:23px;color:#3f4247;letter-spacing:1.06px;-webkit-text-stroke:0.5px #3f4247;transform:scaleX(1.135);">Jul 15th 2024</span><span class="t" style="left:2030.8px;top:758.4px;font-size:23px;line-height:23px;color:#3f4247;letter-spacing:1.11px;-webkit-text-stroke:0.5px #3f4247;transform:scaleX(1.083);">Jul 15th 2024, 10:53 pm</span><i class="tick" style="left:546.5px;top:728.3px"></i><i class="tick" style="left:872px;top:728.3px"></i><i class="tick" style="left:1184px;top:728.3px"></i><i class="tick" style="left:1366px;top:728.3px"></i><i class="tick" style="left:1516px;top:728.3px"></i><i class="tick" style="left:1721px;top:728.3px"></i><i class="tick" style="left:2002px;top:728.3px"></i></div>
<div class="row">
<div class="b" style="left:0px;top:806.8px;width:2278px;height:74px;background:#b2b2b2;"></div><span class="t" style="left:23.6px;top:832.4px;font-size:23px;line-height:23px;color:#3f4247;letter-spacing:1.02px;-webkit-text-stroke:0.5px #3f4247;transform:scaleX(1.181);">Hopstack Test</span><span class="t" style="left:240.8px;top:832.4px;font-size:23px;line-height:23px;color:#3f4247;letter-spacing:0.99px;-webkit-text-stroke:0.5px #3f4247;transform:scaleX(1.214);">Client A</span>
<div class="b" style="left:459.7px;top:813.4px;width:61px;height:61px;background:#9d9583;border-radius:5px;"><i class="dot" style="top:16.3px"></i><i class="dot" style="top:27.1px"></i><i class="dot" style="top:37.8px"></i></div><span class="t" style="left:574.9px;top:832.4px;font-size:23px;line-height:23px;color:#1f344d;letter-spacing:1.11px;-webkit-text-stroke:0.5px #1f344d;transform:scaleX(1.085);">896195</span><span class="t" style="left:901.3px;top:832.4px;font-size:23px;line-height:23px;color:#3f4247;letter-spacing:1.14px;-webkit-text-stroke:0.5px #3f4247;transform:scaleX(1.050);">RECEIVING_STARTED</span><span class="t" style="left:1214.1px;top:832.4px;font-size:23px;line-height:23px;color:#3f4247;-webkit-text-stroke:0.5px #3f4247;transform:scaleX(1.021);">2</span><span class="t" style="left:1395.4px;top:832.4px;font-size:23px;line-height:23px;color:#3f4247;letter-spacing:1.19px;-webkit-text-stroke:0.5px #3f4247;transform:scaleX(1.005);">1100</span><span class="t" style="left:1545.4px;top:832.4px;font-size:23px;line-height:23px;color:#3f4247;letter-spacing:1.12px;-webkit-text-stroke:0.5px #3f4247;transform:scaleX(1.072);">1002</span><span class="t" style="left:2030.8px;top:832.4px;font-size:23px;line-height:23px;color:#3f4247;letter-spacing:1.08px;-webkit-text-stroke:0.5px #3f4247;transform:scaleX(1.109);">Jul 15th 2024, 8:35 pm</span><i class="tick" style="left:546.5px;top:802.3px"></i><i class="tick" style="left:872px;top:802.3px"></i><i class="tick" style="left:1184px;top:802.3px"></i><i class="tick" style="left:1366px;top:802.3px"></i><i class="tick" style="left:1516px;top:802.3px"></i><i class="tick" style="left:1721px;top:802.3px"></i><i class="tick" style="left:2002px;top:802.3px"></i></div>
<div class="row">
<div class="b" style="left:0px;top:880.8px;width:2278px;height:74px;background:#adadb0;"></div><span class="t" style="left:23.6px;top:906.4px;font-size:23px;line-height:23px;color:#3f4247;letter-spacing:1.02px;-webkit-text-stroke:0.5px #3f4247;transform:scaleX(1.181);">Hopstack Test</span><span class="t" style="left:240.8px;top:906.4px;font-size:23px;line-height:23px;color:#3f4247;letter-spacing:0.99px;-webkit-text-stroke:0.5px #3f4247;transform:scaleX(1.214);">Client A</span>
<div class="b" style="left:459.7px;top:887.4px;width:61px;height:61px;background:#9d9583;border-radius:5px;"><i class="dot" style="top:16.3px"></i><i class="dot" style="top:27.1px"></i><i class="dot" style="top:37.8px"></i></div><span class="t" style="left:574.9px;top:906.4px;font-size:23px;line-height:23px;color:#1f344d;letter-spacing:1.01px;-webkit-text-stroke:0.5px #1f344d;transform:scaleX(1.193);">0867</span><span class="t" style="left:901.3px;top:906.4px;font-size:23px;line-height:23px;color:#3f4247;letter-spacing:1.09px;-webkit-text-stroke:0.5px #3f4247;transform:scaleX(1.105);">COMPLETED</span><span class="t" style="left:1214.1px;top:906.4px;font-size:23px;line-height:23px;color:#3f4247;-webkit-text-stroke:0.5px #3f4247;transform:scaleX(1.021);">2</span><span class="t" style="left:1395.4px;top:906.4px;font-size:23px;line-height:23px;color:#3f4247;letter-spacing:1.00px;-webkit-text-stroke:0.5px #3f4247;transform:scaleX(1.196);">200</span><span class="t" style="left:1545.4px;top:906.4px;font-size:23px;line-height:23px;color:#3f4247;letter-spacing:1.00px;-webkit-text-stroke:0.5px #3f4247;transform:scaleX(1.196);">200</span><span class="t" style="left:2030.8px;top:906.4px;font-size:23px;line-height:23px;color:#3f4247;letter-spacing:1.10px;-webkit-text-stroke:0.5px #3f4247;transform:scaleX(1.088);">Jul 15th 2024, 8:17 pm</span><i class="tick" style="left:546.5px;top:876.3px"></i><i class="tick" style="left:872px;top:876.3px"></i><i class="tick" style="left:1184px;top:876.3px"></i><i class="tick" style="left:1366px;top:876.3px"></i><i class="tick" style="left:1516px;top:876.3px"></i><i class="tick" style="left:1721px;top:876.3px"></i><i class="tick" style="left:2002px;top:876.3px"></i></div>
<div class="row">
<div class="b" style="left:0px;top:954.8px;width:2278px;height:74px;background:#b2b2b2;"></div><span class="t" style="left:23.6px;top:980.4px;font-size:23px;line-height:23px;color:#3f4247;letter-spacing:1.02px;-webkit-text-stroke:0.5px #3f4247;transform:scaleX(1.181);">Hopstack Test</span><span class="t" style="left:240.8px;top:980.4px;font-size:23px;line-height:23px;color:#3f4247;letter-spacing:1.00px;-webkit-text-stroke:0.5px #3f4247;transform:scaleX(1.195);">Client B</span>
<div class="b" style="left:459.7px;top:961.4px;width:61px;height:61px;background:#9d9583;border-radius:5px;"><i class="dot" style="top:16.3px"></i><i class="dot" style="top:27.1px"></i><i class="dot" style="top:37.8px"></i></div><span class="t" style="left:574.9px;top:980.4px;font-size:23px;line-height:23px;color:#1f344d;letter-spacing:1.04px;-webkit-text-stroke:0.5px #1f344d;transform:scaleX(1.159);">4567</span><span class="t" style="left:901.3px;top:980.4px;font-size:23px;line-height:23px;color:#3f4247;letter-spacing:1.09px;-webkit-text-stroke:0.5px #3f4247;transform:scaleX(1.105);">COMPLETED</span><span class="t" style="left:1214.1px;top:980.4px;font-size:23px;line-height:23px;color:#3f4247;-webkit-text-stroke:0.5px #3f4247;transform:scaleX(1.021);">2</span><span class="t" style="left:1395.4px;top:980.4px;font-size:23px;line-height:23px;color:#3f4247;letter-spacing:1.20px;-webkit-text-stroke:0.5px #3f4247;">130</span><span class="t" style="left:1545.4px;top:980.4px;font-size:23px;line-height:23px;color:#3f4247;letter-spacing:1.20px;-webkit-text-stroke:0.5px #3f4247;">130</span><span class="t" style="left:2030.8px;top:980.4px;font-size:23px;line-height:23px;color:#3f4247;letter-spacing:1.11px;-webkit-text-stroke:0.5px #3f4247;transform:scaleX(1.083);">Jul 15th 2024, 8:13 pm</span><i class="tick" style="left:546.5px;top:950.3px"></i><i class="tick" style="left:872px;top:950.3px"></i><i class="tick" style="left:1184px;top:950.3px"></i><i class="tick" style="left:1366px;top:950.3px"></i><i class="tick" style="left:1516px;top:950.3px"></i><i class="tick" style="left:1721px;top:950.3px"></i><i class="tick" style="left:2002px;top:950.3px"></i></div>
<div class="row">
<div class="b" style="left:0px;top:1028.8px;width:2278px;height:74px;background:#adadb0;"></div><span class="t" style="left:23.6px;top:1054.4px;font-size:23px;line-height:23px;color:#3f4247;letter-spacing:1.02px;-webkit-text-stroke:0.5px #3f4247;transform:scaleX(1.181);">Hopstack Test</span><span class="t" style="left:240.8px;top:1054.4px;font-size:23px;line-height:23px;color:#3f4247;letter-spacing:0.99px;-webkit-text-stroke:0.5px #3f4247;transform:scaleX(1.214);">Client A</span>
<div class="b" style="left:459.7px;top:1035.4px;width:61px;height:61px;background:#9d9583;border-radius:5px;"><i class="dot" style="top:16.3px"></i><i class="dot" style="top:27.1px"></i><i class="dot" style="top:37.8px"></i></div><span class="t" style="left:574.9px;top:1054.4px;font-size:23px;line-height:23px;color:#1f344d;letter-spacing:1.15px;-webkit-text-stroke:0.5px #1f344d;transform:scaleX(1.041);">ORD_15JUL3</span><span class="t" style="left:901.3px;top:1054.4px;font-size:23px;line-height:23px;color:#3f4247;letter-spacing:1.09px;-webkit-text-stroke:0.5px #3f4247;transform:scaleX(1.105);">COMPLETED</span><span class="t" style="left:1214.1px;top:1054.4px;font-size:23px;line-height:23px;color:#3f4247;-webkit-text-stroke:0.5px #3f4247;transform:scaleX(0.850);">1</span><span class="t" style="left:1395.4px;top:1054.4px;font-size:23px;line-height:23px;color:#3f4247;-webkit-text-stroke:0.5px #3f4247;transform:scaleX(1.023);">5</span><span class="t" style="left:1545.4px;top:1054.4px;font-size:23px;line-height:23px;color:#3f4247;letter-spacing:1.26px;-webkit-text-stroke:0.5px #3f4247;transform:scaleX(0.952);">10</span><span class="t" style="left:2030.8px;top:1054.4px;font-size:23px;line-height:23px;color:#3f4247;letter-spacing:1.12px;-webkit-text-stroke:0.5px #3f4247;transform:scaleX(1.076);">Jul 15th 2024, 6:51 pm</span><i class="tick" style="left:546.5px;top:1024.3px"></i><i class="tick" style="left:872px;top:1024.3px"></i><i class="tick" style="left:1184px;top:1024.3px"></i><i class="tick" style="left:1366px;top:1024.3px"></i><i class="tick" style="left:1516px;top:1024.3px"></i><i class="tick" style="left:1721px;top:1024.3px"></i><i class="tick" style="left:2002px;top:1024.3px"></i></div>
<div class="thead">
<div class="b" style="left:0px;top:0px;width:2278px;height:66px;background:#1f344d;"></div><span class="t" style="left:23.6px;top:21.0px;font-size:23.4px;line-height:23.4px;color:#949dab;letter-spacing:1.11px;-webkit-text-stroke:0.65px #949dab;transform:scaleX(1.167);">Warehouse</span><span class="t" style="left:240.8px;top:21.0px;font-size:23.4px;line-height:23.4px;color:#949dab;letter-spacing:1.09px;-webkit-text-stroke:0.65px #949dab;transform:scaleX(1.194);">Client</span><span class="t" style="left:458.0px;top:21.0px;font-size:23.4px;line-height:23.4px;color:#949dab;letter-spacing:1.06px;-webkit-text-stroke:0.65px #949dab;transform:scaleX(1.222);">Action</span><span class="t" style="left:574.9px;top:21.0px;font-size:23.4px;line-height:23.4px;color:#949dab;letter-spacing:1.12px;-webkit-text-stroke:0.65px #949dab;transform:scaleX(1.163);">Order ID</span><span class="t" style="left:901.3px;top:21.0px;font-size:23.4px;line-height:23.4px;color:#949dab;letter-spacing:1.11px;-webkit-text-stroke:0.65px #949dab;transform:scaleX(1.168);">Status</span><span class="t" style="left:1214.1px;top:21.0px;font-size:23.4px;line-height:23.4px;color:#949dab;letter-spacing:1.20px;-webkit-text-stroke:0.65px #949dab;transform:scaleX(1.080);">No. of SKUs</span><span class="t" style="left:1395.4px;top:21.0px;font-size:23.4px;line-height:23.4px;color:#949dab;letter-spacing:1.11px;-webkit-text-stroke:0.65px #949dab;transform:scaleX(1.176);">Total Qty</span><span class="t" style="left:1545.4px;top:21.0px;font-size:23.4px;line-height:23.4px;color:#949dab;letter-spacing:1.14px;-webkit-text-stroke:0.65px #949dab;transform:scaleX(1.144);">Received Qty</span><span class="t" style="left:1750.1px;top:21.0px;font-size:23.4px;line-height:23.4px;color:#949dab;letter-spacing:1.13px;-webkit-text-stroke:0.65px #949dab;transform:scaleX(1.153);">Consignment Date</span><span class="t" style="left:2030.8px;top:21.0px;font-size:23.4px;line-height:23.4px;color:#949dab;letter-spacing:1.10px;-webkit-text-stroke:0.65px #949dab;transform:scaleX(1.179);">Added Date</span></div></div>
<div class="b" style="left:2765px;top:453px;width:30px;height:1059px;background:#ababab;"></div>
<div class="b" style="left:2773px;top:459.4px;width:16px;height:627.6px;background:#1f344d;border-radius:8px;"></div></div>
<div id="footer">
<div class="b" style="left:432px;top:1512px;width:2418px;height:120px;background:#a1a1a1;"></div><span class="t" style="left:462.2px;top:1559.9px;font-size:24px;line-height:24px;color:#222b38;-webkit-text-stroke:0.45px #222b38;transform:scaleX(1.101);">Showing 1 to 25 of 520 results</span><span class="t" style="left:2208.5px;top:1559.9px;font-size:24px;line-height:24px;color:#1f344d;-webkit-text-stroke:0.2px #1f344d;transform:scaleX(1.105);">Results per page</span>
<div class="b" style="left:2434px;top:1544.6px;width:110px;height:54.8px;background:#b2b2b2;border-radius:11px;border:1px solid #a5a5a9;box-sizing:border-box;box-shadow:0 1px 2px rgba(0,0,0,.08);"></div><span class="t" style="left:2458.3px;top:1561.5px;font-size:19.8px;line-height:19.8px;color:#1f2430;-webkit-text-stroke:0.4px #1f2430;transform:scaleX(1.090);">25</span><svg class="b" style="left:2499.6px;top:1561.8px;" width="21" height="21" viewBox="0 0 24 24"><path d="M19 9l-7 7-7-7" fill="none" stroke="#1f2430" stroke-width="3.4" stroke-linecap="round" stroke-linejoin="round"/></svg>
<div class="b" style="left:2568px;top:1544.6px;width:252px;height:54.8px;background:#b2b2b2;border-radius:11px;border:1px solid #a5a5a9;box-sizing:border-box;box-shadow:0 1px 2px rgba(0,0,0,.08);"></div>
<div class="b" style="left:2713.8px;top:1545.5px;width:1.2px;height:53px;background:#9c9ca0;"></div><svg class="b" style="left:2581.7px;top:1558.4px;" width="27.4" height="27.4" viewBox="0 0 24 24"><path d="M15 19l-7-7 7-7" fill="none" stroke="#94969d" stroke-width="2.45" stroke-linecap="round" stroke-linejoin="round"/></svg><span class="t" style="left:2611.8px;top:1561.5px;font-size:19.8px;line-height:19.8px;color:#94969d;-webkit-text-stroke:0.5px #94969d;transform:scaleX(1.173);">Previous</span><span class="t" style="left:2727.6px;top:1561.5px;font-size:19.8px;line-height:19.8px;color:#3e4453;letter-spacing:0.08px;-webkit-text-stroke:0.5px #3e4453;transform:scaleX(1.180);">Next</span><svg class="b" style="left:2778.9px;top:1558.4px;" width="27.4" height="27.4" viewBox="0 0 24 24"><path d="M9 5l7 7-7 7" fill="none" stroke="#3e4453" stroke-width="2.45" stroke-linecap="round" stroke-linejoin="round"/></svg></div>
<div id="header">
<div class="b" style="left:432px;top:6px;width:2418px;height:96px;background:#b2b2b2;box-shadow:0 1px 4px rgba(0,0,0,.13);"></div><svg class="b" style="left:2540.2px;top:29.8px;" width="48" height="48" viewBox="0 0 24 24"><path d="M8 7h12m0 0l-4-4m4 4l-4 4m0 6H4m0 0l4 4m-4-4l4-4" fill="none" stroke="#000" stroke-width="2" stroke-linecap="round" stroke-linejoin="round"/></svg><svg class="b" style="left:2606px;top:29.8px;" width="48" height="48" viewBox="0 0 24 24"><path d="M15 17h5l-1.405-1.405A2.032 2.032 0 0118 14.158V11a6.002 6.002 0 00-4-5.659V5a2 2 0 10-4 0v.341C7.67 6.165 6 8.388 6 11v3.159c0 .538-.214 1.055-.595 1.436L4 17h5m6 0v1a3 3 0 11-6 0v-1m6 0H9" fill="none" stroke="#000" stroke-width="2" stroke-linecap="round" stroke-linejoin="round"/></svg>
<div class="b" style="left:2630px;top:23.8px;width:60px;height:36px;background:#6a1a1a;border-radius:18px;"></div><span class="t" style="left:2641.9px;top:31.1px;font-size:22px;line-height:22px;color:#bdb1b1;letter-spacing:-0.42px;-webkit-text-stroke:0.6px #bdb1b1;">222</span><svg class="b" style="left:2708px;top:29.8px;" width="48" height="48" viewBox="0 0 20 20"><path d="M18 10a8 8 0 11-16 0 8 8 0 0116 0zm-6-3a2 2 0 11-4 0 2 2 0 014 0zm-2 4a5 5 0 00-4.546 2.916A5.986 5.986 0 0010 16a5.986 5.986 0 004.546-2.084A5 5 0 0010 11z" fill="#000" fill-rule="evenodd" clip-rule="evenodd"/></svg><span class="t" style="left:2761.8px;top:28.8px;font-size:20px;line-height:20px;color:#111;transform:scaleX(1.156);">sneha</span><span class="t" style="left:2761.8px;top:61.5px;font-size:14.7px;line-height:14.7px;color:#111;transform:scaleX(1.132);">ADMIN</span></div>
<div id="actions-menu">
<div class="b" style="left:2349px;top:204.2px;width:164px;height:337.8px;background:#fff;border-radius:11px;box-shadow:0 4px 10px rgba(0,0,0,.12);"></div>
<div class="b" style="left:2356px;top:211.6px;width:149.6px;height:107.2px;background:#eff6fe;border-radius:14px;"></div><span class="t" style="left:2374.9px;top:235.4px;font-size:23.4px;line-height:23.4px;color:#204a73;-webkit-text-stroke:0.35px #204a73;transform:scaleX(1.175);">Export</span><span class="t" style="left:2374.9px;top:272.0px;font-size:23.4px;line-height:23.4px;color:#204a73;-webkit-text-stroke:0.35px #204a73;transform:scaleX(1.178);">Report</span><span class="t" style="left:2374.9px;top:343.3px;font-size:23.4px;line-height:23.4px;color:#6d6e70;letter-spacing:0.12px;-webkit-text-stroke:0.35px #6d6e70;transform:scaleX(1.180);">Download</span><span class="t" style="left:2374.4px;top:379.6px;font-size:23.4px;line-height:23.4px;color:#6d6e70;letter-spacing:0.20px;-webkit-text-stroke:0.35px #6d6e70;transform:scaleX(1.180);">Template</span><span class="t" style="left:2374.9px;top:451.5px;font-size:23.4px;line-height:23.4px;color:#6d6e70;-webkit-text-stroke:0.35px #6d6e70;transform:scaleX(1.166);">Upload</span><span class="t" style="left:2374.9px;top:487.5px;font-size:23.4px;line-height:23.4px;color:#6d6e70;-webkit-text-stroke:0.35px #6d6e70;transform:scaleX(1.118);">File</span></div>
<div class="b" style="left:2850px;top:6px;width:30px;height:1626px;background:#fff;"></div>
<div class="b" style="left:2858px;top:11.8px;width:16px;height:1510.7px;background:#2c4a70;border-radius:8px;"></div></div></body></html>
